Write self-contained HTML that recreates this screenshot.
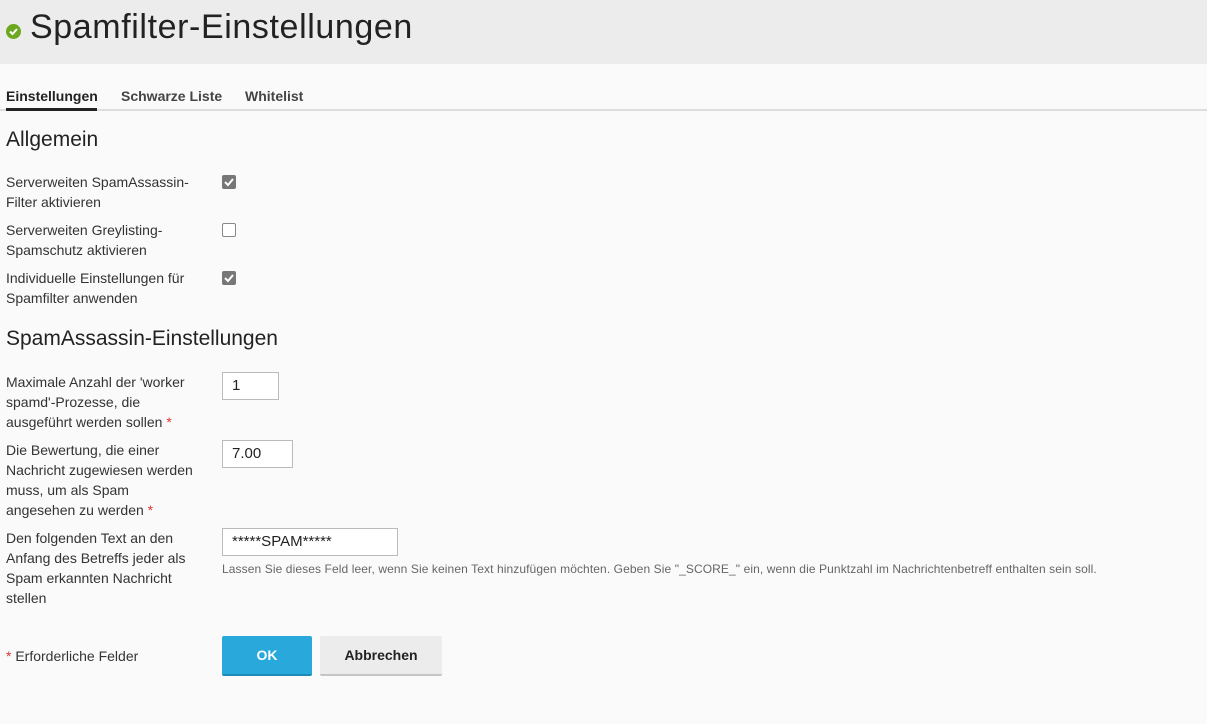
<!DOCTYPE html>
<html><head><meta charset="utf-8"><style>
*{box-sizing:border-box;margin:0;padding:0}
body{width:1207px;height:724px;background:#fafafa;font-family:"Liberation Sans",sans-serif;color:#222;font-size:14px;position:relative;overflow:hidden}
.hdr{position:absolute;left:0;top:0;width:1207px;height:64px;background:#ececec}
.hdr h1{position:absolute;left:30px;top:8px;font-size:34px;font-weight:normal;color:#222;letter-spacing:0.6px}
.dot{position:absolute;left:6px;top:24px;width:15px;height:15px;border-radius:50%;background:#6ca81f}
.tabs{position:absolute;left:0;top:86px;width:1207px;height:25px;border-bottom:2px solid #ddd}
.tab{position:absolute;top:2px;font-size:14px;font-weight:bold;color:#444}
.t{position:absolute;left:6px;line-height:20px;font-size:14px;color:#333;width:205px}
h2{position:absolute;left:6px;font-size:21px;font-weight:normal;color:#222}
.cb{position:absolute;left:222px;width:14px;height:14px;border-radius:2px}
.cb.on{background:#777}
.cb.off{border:1.5px solid #888;background:#fff}
.inp{position:absolute;left:222px;height:28px;border:1px solid #bbb;background:#fff;padding-left:9px;line-height:26px;font-size:15px}
.r{color:#d33}
</style></head><body>
<div class="hdr"><div class="dot"><svg width="15" height="15"><path d="M4 7.5l2.5 2.5 4.5-5" stroke="#fff" stroke-width="2" fill="none"/></svg></div><h1>Spamfilter-Einstellungen</h1></div>
<div class="tabs">
<div class="tab" style="left:6px;color:#222">Einstellungen</div>
<div class="tab" style="left:121px">Schwarze Liste</div>
<div class="tab" style="left:245px">Whitelist</div>
<div style="position:absolute;left:6px;top:22px;width:91px;height:3px;background:#222"></div>
</div>
<h2 style="top:128px">Allgemein</h2>
<div class="t" style="top:172px">Serverweiten SpamAssassin-Filter aktivieren</div>
<div class="cb on" style="top:175px"><svg width="14" height="14"><path d="M3 7l3 3 5-6" stroke="#fff" stroke-width="2" fill="none"/></svg></div>
<div class="t" style="top:220px">Serverweiten Greylisting-Spamschutz aktivieren</div>
<div class="cb off" style="top:223px"></div>
<div class="t" style="top:268px">Individuelle Einstellungen für Spamfilter anwenden</div>
<div class="cb on" style="top:271px"><svg width="14" height="14"><path d="M3 7l3 3 5-6" stroke="#fff" stroke-width="2" fill="none"/></svg></div>
<h2 style="top:327px">SpamAssassin-Einstellungen</h2>
<div class="t" style="top:372px;width:200px">Maximale Anzahl der 'worker spamd'-Prozesse, die ausgeführt werden sollen <span class="r">*</span></div>
<div class="inp" style="top:372px;width:57px">1</div>
<div class="t" style="top:440px;width:200px">Die Bewertung, die einer Nachricht zugewiesen werden muss, um als Spam<br>angesehen zu werden <span class="r">*</span></div>
<div class="inp" style="top:440px;width:71px">7.00</div>
<div class="t" style="top:528px;width:200px">Den folgenden Text an den Anfang des Betreffs jeder als Spam erkannten Nachricht stellen</div>
<div class="inp" style="top:528px;width:176px">*****SPAM*****</div>
<div style="position:absolute;left:222px;top:562px;font-size:12px;color:#666;letter-spacing:0.1px">Lassen Sie dieses Feld leer, wenn Sie keinen Text hinzufügen möchten. Geben Sie "_SCORE_" ein, wenn die Punktzahl im Nachrichtenbetreff enthalten sein soll.</div>
<div class="t" style="top:646px"><span class="r">*</span> Erforderliche Felder</div>
<div style="position:absolute;left:222px;top:636px;width:90px;height:40px;background:#29a8dc;border-bottom:2px solid #1d8bb8;border-radius:2px;color:#fff;font-weight:bold;text-align:center;line-height:39px">OK</div>
<div style="position:absolute;left:320px;top:636px;width:122px;height:40px;background:#ececec;border-bottom:2px solid #c4c4c4;border-radius:2px;color:#222;font-weight:bold;text-align:center;line-height:39px">Abbrechen</div>
</body></html>
